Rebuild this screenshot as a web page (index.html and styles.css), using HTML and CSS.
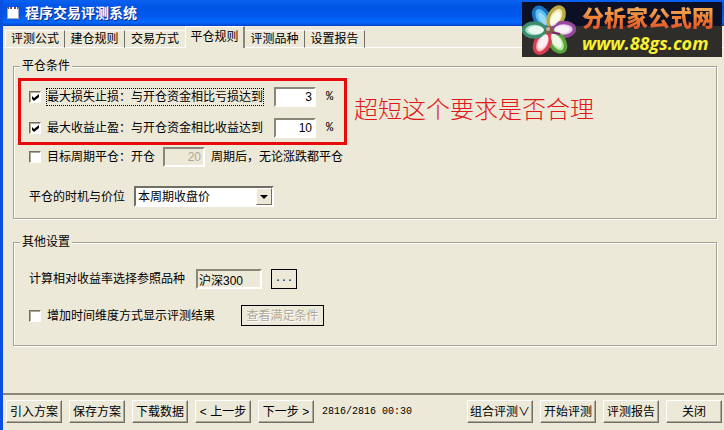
FILE: index.html
```html
<!DOCTYPE html>
<html lang="zh-CN">
<head>
  <meta charset="UTF-8">
  <meta name="viewport" content="width=device-width, initial-scale=1.0">
  <title>程序交易评测系统</title>
  <link rel="stylesheet" href="styles.css">
</head>
<body>
  <header class="titlebar">
    <span class="app-icon"></span>
    <h1>程序交易评测系统</h1>
  </header>

  <div class="banner">
    <svg class="flower" viewBox="0 0 54 54" width="54" height="54">
      <g stroke-width="3.5">
        <ellipse cx="27" cy="12.5" rx="7" ry="11" fill="#5cc0f0" stroke="#1c74c0" transform="rotate(-30 27 27)"/>
        <ellipse cx="27" cy="12.5" rx="7" ry="11" fill="#f0e8a0" stroke="#b8a848" transform="rotate(29 27 27)"/>
        <ellipse cx="27" cy="12.5" rx="7" ry="11" fill="#e8c8ec" stroke="#94489c" transform="rotate(88 27 27)"/>
        <ellipse cx="27" cy="12.5" rx="7" ry="11" fill="#b8e8a0" stroke="#5ca040" transform="rotate(146 27 27)"/>
        <ellipse cx="27" cy="12.5" rx="7" ry="11" fill="#fac0c8" stroke="#d83c50" transform="rotate(207 27 27)"/>
        <ellipse cx="27" cy="12.5" rx="7" ry="11" fill="#a8e0c4" stroke="#3c8c70" transform="rotate(270 27 27)"/>
      </g>
      <g fill="#fff" opacity="0.75">
        <ellipse cx="27" cy="14" rx="3" ry="7" opacity="0.5" transform="rotate(-30 27 27)"/>
        <ellipse cx="27" cy="14" rx="4" ry="8" transform="rotate(29 27 27)"/>
        <ellipse cx="27" cy="14" rx="4" ry="8" transform="rotate(88 27 27)"/>
        <ellipse cx="27" cy="14" rx="4" ry="8" transform="rotate(146 27 27)"/>
        <ellipse cx="27" cy="14" rx="4" ry="8" transform="rotate(207 27 27)"/>
        <ellipse cx="27" cy="14" rx="4" ry="8" transform="rotate(270 27 27)"/>
      </g>
      <path d="M28 29 L38 31" stroke="#80207c" stroke-width="2"/>
      <circle cx="27" cy="27" r="4" fill="#8a5a48"/>
      <circle cx="26" cy="26" r="2" fill="#b8b8b0"/>
    </svg>
    <div class="banner-text">
      <div class="site-name">分析家公式网</div>
      <div class="site-url">www.88gs.com</div>
    </div>
  </div>

  <nav class="tabs">
    <button class="tab">评测公式</button>
    <button class="tab">建仓规则</button>
    <button class="tab">交易方式</button>
    <button class="tab active">平仓规则</button>
    <button class="tab">评测品种</button>
    <button class="tab">设置报告</button>
  </nav>

  <main class="panel">
    <fieldset class="group">
      <legend>平仓条件</legend>
      <div class="note">
        <div class="note-box">
          <div class="row">
            <input type="checkbox" id="stopLoss" checked>
            <label for="stopLoss" class="focused">最大损失止损：与开仓资金相比亏损达到</label>
            <input type="text" class="field num" value="3" aria-label="最大损失止损">
            <span class="percent">%</span>
          </div>
          <div class="row">
            <input type="checkbox" id="takeProfit" checked>
            <label for="takeProfit">最大收益止盈：与开仓资金相比收益达到</label>
            <input type="text" class="field num" value="10" aria-label="最大收益止盈">
            <span class="percent">%</span>
          </div>
        </div>
        <p class="note-text">超短这个要求是否合理</p>
      </div>
      <div class="row period">
        <input type="checkbox" id="period">
        <label for="period">目标周期平仓：开仓</label>
        <input type="text" class="field num" value="20" aria-label="周期" disabled>
        <span class="after">周期后，无论涨跌都平仓</span>
      </div>
      <div class="row timing">
        <label for="price">平仓的时机与价位</label>
        <div class="combo">
          <select id="price">
            <option>本周期收盘价</option>
          </select>
          <span class="arrow"></span>
        </div>
      </div>
    </fieldset>

    <fieldset class="group other">
      <legend>其他设置</legend>
      <div class="row">
        <label for="symbol">计算相对收益率选择参照品种</label>
        <input type="text" id="symbol" class="field symbol" value="沪深300" readonly>
        <button class="flat browse">...</button>
      </div>
      <div class="row">
        <input type="checkbox" id="timeDim">
        <label for="timeDim">增加时间维度方式显示评测结果</label>
        <button class="flat view" disabled>查看满足条件</button>
      </div>
    </fieldset>
  </main>

  <footer class="footer">
    <button class="btn">引入方案</button>
    <button class="btn">保存方案</button>
    <button class="btn">下载数据</button>
    <button class="btn">&lt; 上一步</button>
    <button class="btn">下一步 &gt;</button>
    <span class="status">2816/2816 00:30</span>
    <button class="btn wide">组合评测∨</button>
    <button class="btn">开始评测</button>
    <button class="btn">评测报告</button>
    <button class="btn">关闭</button>
  </footer>
</body>
</html>
```

FILE: styles.css
```css
* {
  box-sizing: border-box;
}

body {
  margin: 0;
  min-height: 100vh;
  display: flex;
  flex-direction: column;
  position: relative;
  background-color: #ece9d8;
  border-left: 3px solid #0a4fe0;
  color: #000;
  font-family: "Liberation Sans", "Noto Sans CJK SC", sans-serif;
  font-size: 12px;
  line-height: 18px;
}

button, input, select {
  font: inherit;
  color: inherit;
  margin: 0;
  border-radius: 0;
}

.titlebar {
  height: 26px;
  margin-left: -3px;
  padding-left: 7px;
  display: flex;
  align-items: center;
  gap: 6px;
  background: linear-gradient(#0a62f0, #0054e6 25%, #0058ee 60%, #0668ff 85%, #0044c8);
}

.titlebar h1 {
  margin: 0;
  color: #fff;
  font-size: 14px;
  line-height: 20px;
  text-shadow: 1px 1px #0a2f8c;
}

.app-icon {
  width: 12px;
  height: 12px;
  background-color: #fff;
  border: 1px solid #a9a5c4;
  border-top: 2px dotted #6a4a5c;
}

/* site banner over the top right corner */
.banner {
  position: absolute;
  top: 2px;
  right: 2px;
  width: 200px;
  height: 55px;
  display: flex;
  align-items: center;
  background: linear-gradient(#0c1024 24px, #2e2d29 24px);
}

.banner-text {
  margin-left: 6px;
  white-space: nowrap;
}

.site-name {
  font-size: 22px;
  font-weight: 900;
  line-height: 26px;
  background: linear-gradient(#f2b25c, #ee7a30 50%, #e04a28);
  -webkit-background-clip: text;
  background-clip: text;
  color: transparent;
}

.site-url {
  color: #f8f032;
  font-family: "Open Sans", "Noto Sans", sans-serif;
  font-size: 18px;
  font-weight: bold;
  font-style: italic;
  line-height: 22px;
}

.tabs {
  height: 22px;
  padding: 0 0 0 2px;
  display: flex;
  align-items: flex-end;
  box-shadow: inset 0 -1px #fff;
}

.tab {
  width: 60px;
  height: 18px;
  padding: 0;
  line-height: 16px;
  background-color: #ece9d8;
  border: 0;
  border-top: 1px solid #fff;
  border-right: 1px solid #716f64;
  border-bottom: 1px solid #fff;
}

.tab:first-child {
  border-left: 1px solid #fff;
}

.tab.active {
  height: 22px;
  padding-bottom: 2px;
  border-left: 1px solid #fff;
  border-right: 2px solid #8a877a;
  border-bottom: 0;
}

.tab:has(+ .active) {
  border-right: 0;
}

.panel {
  padding: 9px 7px 24px 10px;
}

.group {
  margin: 0;
  min-width: 0;
  padding: 3px 0 11px;
  border: 1px solid #a5a292;
  box-shadow: 1px 1px #fff, inset 1px 1px #fff;
}

.group legend {
  margin-left: 6px;
  padding: 0 2px;
  background-color: #ece9d8;
}

.group.other {
  margin-top: 14px;
  padding: 18px 0 19px;
}

.row {
  display: flex;
  align-items: center;
  padding-left: 15px;
  white-space: nowrap;
}

.other .row + .row {
  margin-top: 16px;
}

input[type="checkbox"] {
  appearance: none;
  width: 12px;
  height: 12px;
  margin-right: 6px;
  background-color: #fff;
  border: 1px solid;
  border-color: #716f64 #fff #fff #716f64;
  box-shadow: inset 1px 1px #aca899;
}

input[type="checkbox"]:checked::before {
  content: "";
  display: block;
  width: 7px;
  height: 7px;
  margin: 2px;
  background-color: #000;
  clip-path: polygon(0 2px, 2px 4px, 7px 0, 7px 3px, 2px 7px, 0 5px);
}

.note {
  display: flex;
  align-items: center;
  padding-left: 4px;
}

.note-box {
  padding: 6px 11px 4px 8px;
  border: 3px solid #e60a0a;
}

.note-box .row {
  padding-left: 0;
}

.note-box .row + .row {
  margin-top: 11px;
}

.note-text {
  margin: 0 0 0 7px;
  padding-bottom: 8px;
  color: #e01818;
  font-family: "Noto Sans CJK SC", sans-serif;
  font-size: 24px;
  font-weight: 300;
  line-height: 30px;
  white-space: nowrap;
}

.focused {
  outline: 1px dotted #000;
  line-height: 16px;
}

.field {
  width: 42px;
  height: 20px;
  padding: 0 2px;
  background-color: #fff;
  border: 2px solid;
  border-color: #8a877a #fff #fff #8a877a;
}

.num {
  margin-left: 11px;
  text-align: right;
}

.percent {
  width: 7px;
  margin-left: 10px;
  font-family: "Liberation Mono", monospace;
}

.period {
  margin-top: 2px;
}

.period .num {
  margin-left: 8px;
  background-color: #ece9d8;
  color: #aca899;
}

.period .after {
  margin-left: 6px;
}

.timing {
  margin-top: 19px;
}

.combo {
  position: relative;
  margin-left: 9px;
}

.combo select {
  appearance: none;
  display: block;
  width: 140px;
  height: 21px;
  padding: 0 20px 0 2px;
  background-color: #fff;
  border: 2px solid;
  border-color: #716f64 #fff #fff #716f64;
}

.arrow {
  position: absolute;
  top: 2px;
  right: 2px;
  width: 16px;
  height: 17px;
  background-color: #ece9d8;
  border: 1px solid;
  border-color: #fff #716f64 #716f64 #fff;
  pointer-events: none;
}

.arrow::before {
  content: "";
  display: block;
  margin: 6px 3px;
  border: 4px solid transparent;
  border-top-color: #000;
  border-bottom: 0;
}

.symbol {
  width: 66px;
  margin-left: 11px;
  padding: 0 1px;
  background-color: #ece9d8;
}

.flat {
  height: 21px;
  padding: 0;
  background-color: #ece9d8;
  border: 1px solid #000;
  line-height: 16px;
}

.browse {
  width: 26px;
  height: 20px;
  margin-left: 9px;
  font-family: "Liberation Mono", monospace;
  font-size: 10px;
}

.view {
  width: 83px;
  margin-left: 26px;
}

.flat:disabled {
  color: #aca899;
  text-shadow: 1px 1px #fff;
}

.footer {
  margin-top: auto;
  padding: 5px 2px 7px 3px;
  display: flex;
  align-items: center;
  gap: 7px;
  border-top: 2px solid #8a877a;
}

.btn {
  flex: none;
  width: 56px;
  height: 23px;
  padding: 0;
  background-color: #ece9d8;
  border: 1px solid;
  border-color: #fff #716f64 #716f64 #fff;
  box-shadow: inset -1px -1px #aca899;
  white-space: nowrap;
}

.btn.wide {
  width: 66px;
}

.status {
  margin: 0 auto 0 1px;
  font-family: "Liberation Mono", monospace;
  font-size: 10px;
  white-space: nowrap;
}
```
